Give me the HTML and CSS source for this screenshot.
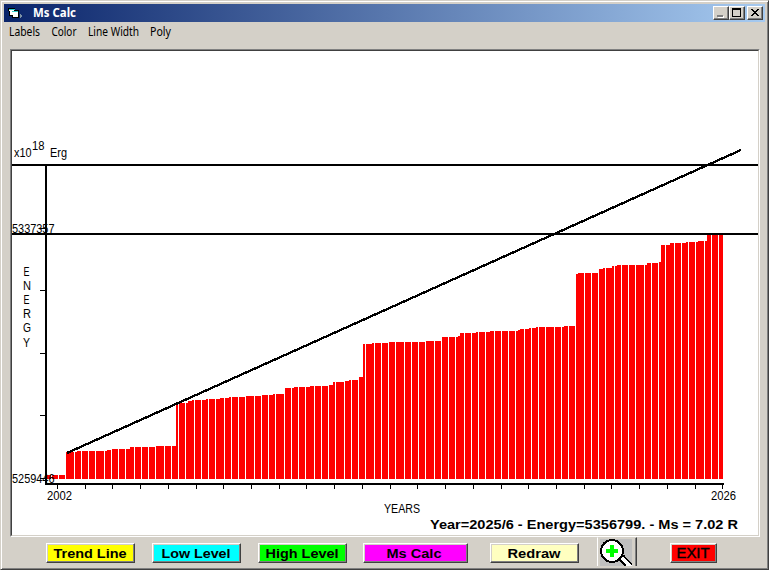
FILE: index.html
```html
<!DOCTYPE html>
<html lang="en">
<head>
<meta charset="utf-8">
<title>Ms Calc</title>
<link rel="stylesheet" href="styles.css">
</head>
<body>
<div class="window">
  <header class="titlebar">
    <svg class="app-icon" width="16" height="12" viewBox="0 0 16 12" shape-rendering="crispEdges">
      <path d="M0 1h7v2h4v8H4V9H1V4H0z" fill="#000"/>
      <path d="M1 3h5v5H2V4H1zM5 5h5v5H5z" fill="#fff"/>
      <path d="M1 2h6v1H1zM4 4h6v1H4z" fill="#3cc"/>
      <path d="M12 7l3 2-3 2z" fill="#7b91a5"/>
    </svg>
    <h1 class="title"><svg width="46" height="18"><text x="0" y="13" textLength="43" lengthAdjust="spacingAndGlyphs">Ms Calc</text></svg></h1>
    <div class="controls">
      <button class="control" aria-label="Minimize"><svg width="12" height="10" shape-rendering="crispEdges"><path d="M3 8h6v2H3z" fill="#fff"/><path d="M2 7h6v2H2z" fill="#808080"/></svg></button>
      <button class="control" aria-label="Maximize"><svg width="12" height="10" shape-rendering="crispEdges"><path d="M1 0h9v9H1zM2 2v6h7V2z" fill="#000" fill-rule="evenodd"/></svg></button>
      <button class="control close" aria-label="Close"><svg width="12" height="10" shape-rendering="crispEdges"><path d="M2 1h2v1h1v1h2V2h1V1h2v1H9v1H8v1H7v1h1v1h1v1h1v1H8V7H7V6H5v1H4v1H2V7h1V6h1V5h1V4H4V3H3V2H2z" fill="#000"/></svg></button>
    </div>
  </header>
  <nav class="menu">
    <svg width="180" height="18">
      <text x="0" y="13" textLength="31" lengthAdjust="spacingAndGlyphs">Labels</text>
      <text x="42.500" y="13" textLength="25" lengthAdjust="spacingAndGlyphs">Color</text>
      <text x="79" y="13" textLength="51" lengthAdjust="spacingAndGlyphs">Line Width</text>
      <text x="141" y="13" textLength="21" lengthAdjust="spacingAndGlyphs">Poly</text>
    </svg>
  </nav>
  <main class="plot">
    <svg class="chart" width="746" height="484" viewBox="12 51 746 484">
      <g shape-rendering="crispEdges">
        <path class="bars" d="M47 479V475H66V452H77V451H107V450H112V449H130V447H156V446H176V404H179V403H188V401H192V400H206V399H220V398H229V397H246V396H262V395H273V394H285V388H294V387H310V386H329V385H333V382H345V381H349V380H359V377H363V344H372V343H389V342H426V341H442V337H458V336H460V333H476V332H490V331H518V330H520V329H529V328H536V327H564V326H576V274H578V273H599V269H603V268H612V266H617V265H647V263H659V262H661V245H670V243H686V242H698V241H707V234H723V479Z"/>
        <g id="gaps"></g>
        <path class="ink" d="M12 164h746v2H12zM12 233h746v2H12zM45 164h2v321h-2zM45 483h679v2H45z"/>
        <path class="ink" d="M40 228h5v1h-5zM40 290h5v1h-5zM40 353h5v1h-5zM40 415h5v1h-5zM40 478h5v1h-5z"/>
        <g id="ticks"></g>
        <path class="trend" d="M67 453L741 150"/>
      </g>
      <g class="label">
        <text x="14" y="157" textLength="17.500" lengthAdjust="spacingAndGlyphs">x10</text>
        <text x="32" y="150" textLength="12.500" lengthAdjust="spacingAndGlyphs">18</text>
        <text x="50" y="157" textLength="17" lengthAdjust="spacingAndGlyphs">Erg</text>
        <text x="12" y="233" textLength="42.500" lengthAdjust="spacingAndGlyphs">5337357</text>
        <text x="12" y="483" textLength="42.500" lengthAdjust="spacingAndGlyphs">5259446</text>
        <text x="47" y="500" textLength="25" lengthAdjust="spacingAndGlyphs">2002</text>
        <text x="711" y="500" textLength="25" lengthAdjust="spacingAndGlyphs">2026</text>
        <text x="384" y="513" textLength="36" lengthAdjust="spacingAndGlyphs">YEARS</text>
        <g class="axis-name">
          <text x="23.500" y="276" textLength="6" lengthAdjust="spacingAndGlyphs">E</text>
          <text x="23" y="290" textLength="8" lengthAdjust="spacingAndGlyphs">N</text>
          <text x="23.500" y="304" textLength="6" lengthAdjust="spacingAndGlyphs">E</text>
          <text x="23" y="318" textLength="8" lengthAdjust="spacingAndGlyphs">R</text>
          <text x="23" y="332" textLength="8" lengthAdjust="spacingAndGlyphs">G</text>
          <text x="23" y="347" textLength="7" lengthAdjust="spacingAndGlyphs">Y</text>
        </g>
      </g>
      <text class="strong" x="430" y="529" textLength="308" lengthAdjust="spacingAndGlyphs">Year=2025/6 - Energy=5356799. - Ms = 7.02 R</text>
    </svg>
  </main>
  <footer class="toolbar">
    <button class="btn yellow"><svg width="83" height="16"><text x="41" y="13" textLength="73" lengthAdjust="spacingAndGlyphs">Trend Line</text></svg></button>
    <button class="btn cyan"><svg width="83" height="16"><text x="41" y="13" textLength="69" lengthAdjust="spacingAndGlyphs">Low Level</text></svg></button>
    <button class="btn green"><svg width="83" height="16"><text x="41" y="13" textLength="73" lengthAdjust="spacingAndGlyphs">High Level</text></svg></button>
    <button class="btn magenta"><svg width="83" height="16"><text x="40" y="13" textLength="55" lengthAdjust="spacingAndGlyphs">Ms Calc</text></svg></button>
    <button class="btn cream"><svg width="83" height="16"><text x="41" y="13" textLength="53" lengthAdjust="spacingAndGlyphs">Redraw</text></svg></button>
    <button class="zoom" aria-label="Zoom in">
      <svg width="32" height="27" viewBox="0 0 32 27" shape-rendering="crispEdges">
        <path d="M0 0h32v27H0z" fill="#c0c0c0"/>
        <path d="M19 20l4-3 9 9v1h-6z" fill="#fff"/>
        <path d="M19 20l7 7M22 17h2l8 9" fill="none" stroke="#000" stroke-width="1.500"/>
        <circle cx="12" cy="12" r="11" fill="#fff" stroke="#000" stroke-width="2"/>
        <path d="M10 6h4v4h4v4h-4v4h-4v-4H6v-4h4z" fill="#0f0"/>
      </svg>
    </button>
    <button class="btn exit"><svg width="42" height="16"><text x="20" y="13" textLength="33" lengthAdjust="spacingAndGlyphs">EXIT</text></svg></button>
  </footer>
</div>
<script src="chart.js"></script>
</body>
</html>
```
FILE: styles.css
```css
* { box-sizing: border-box; }
body { margin: 0; background: #d4d0c8; overflow: hidden; }
button { padding: 0; margin: 0; border-radius: 0; display: flex; align-items: center; justify-content: center; flex: none; }
svg { display: block; flex: none; }
.window {
  width: 769px; height: 570px; display: flex; flex-direction: column;
  background: #d4d0c8; padding: 3px 2px 1px 3px;
  border: 1px solid #d4d0c8; border-right-color: #404040; border-bottom-color: #404040;
  box-shadow: inset 1px 1px #fff, inset -1px -1px #808080;
}
.titlebar {
  height: 18px; flex: none; width: 761px; display: flex; align-items: center; padding: 0 2px 0 4px;
  background: linear-gradient(90deg, #0a246a, #a6caf0);
}
.title { margin: 0 0 0 9px; flex: 1; }
.title text { font: bold 12px "Noto Sans", sans-serif; fill: #fff; }
.controls { display: flex; }
.control {
  width: 16px; height: 14px; background: #d4d0c8; border: 1px solid;
  border-color: #fff #404040 #404040 #fff; box-shadow: inset -1px -1px #808080;
}
.close { margin-left: 2px; }
.menu { height: 27px; flex: none; padding: 1px 0 0 5px; }
.menu text { font: 12px "Noto Sans", sans-serif; fill: #000; }
.plot {
  width: 750px; height: 488px; flex: none; margin-left: 6px; background: #fff;
  border: 1px solid; border-color: #808080 #fff #fff #808080;
}
.chart { border: 1px solid; border-color: #404040 #d4d0c8 #d4d0c8 #404040; box-sizing: content-box; }
.bars { fill: #f00; }
.gap { fill: #fff; }
.ink { fill: #000; }
.trend { fill: none; stroke: #000; stroke-width: 2.3; }
.label { font: 12px "Liberation Sans", Arial, sans-serif; }
.axis-name { font-size: 12px; }
.strong { font: bold 13.5px "Liberation Sans", Arial, sans-serif; }
.toolbar { height: 29px; display: flex; padding-left: 42px; }
.btn {
  width: 89px; height: 20px; margin: 6px 17px 0 0; border: 1px solid;
  border-color: #fff #404040 #404040 #fff; box-shadow: inset -1px -1px #808080, inset 1px 1px #d4d0c8;
}
.btn text { font: bold 13.5px "Liberation Sans", Arial, sans-serif; text-anchor: middle; }
.yellow { background: #ff0; }
.cyan { background: #0ff; }
.green { background: #0f0; margin-right: 16px; }
.magenta { background: #f0f; width: 105px; margin-right: 22px; }
.cream { background: #ffffc0; margin-right: 18px; }
.exit { background: #f00; width: 47px; margin-right: 0; }
.btn.exit text { font-weight: normal; font-size: 14px; stroke: #000; stroke-width: .4px; }
.zoom {
  width: 40px; height: 29px; margin-right: 33px; background: #d4d0c8;
  align-items: flex-start; justify-content: flex-start; padding: 1px 0 0 2px;
  border: 1px solid; border-color: #d4d0c8 #404040 #d4d0c8 #fff; border-bottom: 0;
  box-shadow: inset -1px 0 #808080;
}
```
FILE: chart.js
```js
function addRect(parent, cls, x, y, w, h) {
  const r = document.createElementNS("http://www.w3.org/2000/svg", "rect");
  r.setAttribute("class", cls);
  r.setAttribute("x", x);
  r.setAttribute("y", y);
  r.setAttribute("width", w);
  r.setAttribute("height", h);
  parent.appendChild(r);
}
// White separators between bars repeat every four bars.
const gaps = document.getElementById("gaps");
for (let base = 44; base < 723; base += 30) {
  for (const step of [0, 7, 14, 21]) {
    const x = base + step;
    if (x > 47 && x < 723) addRect(gaps, "gap", x, 230, 1, 250);
  }
}
// One tick for each year.
const ticks = document.getElementById("ticks");
for (let i = 0; i < 25; i++) {
  addRect(ticks, "ink", Math.round(57 + i * 27.72), 485, 1, 4);
}
```
